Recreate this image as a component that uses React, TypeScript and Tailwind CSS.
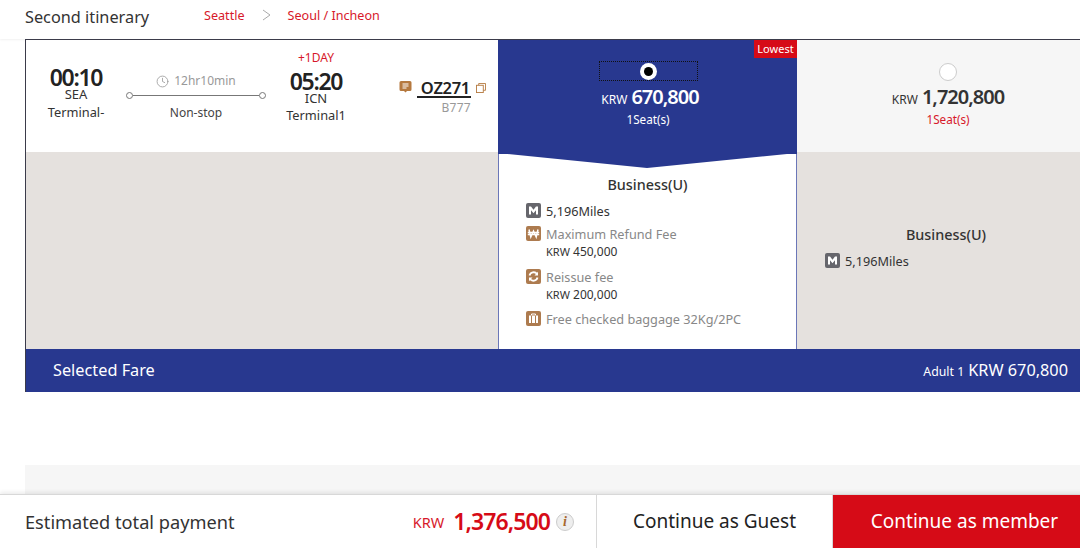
import { Clock } from "lucide-react";

const font = "font-['Noto_Sans','Open_Sans',sans-serif]";

function Square({ color, children }: { color: string; children: React.ReactNode }) {
  return (
    <svg width="15" height="15" viewBox="0 0 15 15" className="shrink-0">
      <rect width="15" height="15" rx="2" fill={color} />
      {children}
    </svg>
  );
}

function MilesIcon() {
  return (
    <Square color="#66666c">
      <path d="M3 11.500V3.500h2l2.500 3.200L10 3.500h2v8h-2V7.200L7.500 10.200 5 7.200v4.300z" fill="#fff" />
    </Square>
  );
}

function WonIcon() {
  return (
    <Square color="#ad7b4f">
      <path d="M3 3.500l1.800 7.500 2.700-6 2.700 6L12 3.500M1.800 6.500h11.400M1.800 8.500h11.400" stroke="#fff" strokeWidth="1.500" fill="none" />
    </Square>
  );
}

function ReissueIcon() {
  return (
    <Square color="#ad7b4f">
      <path d="M3.500 6.500a4.200 4.200 0 0 1 7.500-1.500M11.500 8.500a4.200 4.200 0 0 1-7.500 1.500" stroke="#fff" strokeWidth="1.800" fill="none" />
      <path d="M12 2.800V6.600H8.500zM3 12.200V8.400h3.500z" fill="#fff" />
    </Square>
  );
}

function BagIcon() {
  return (
    <Square color="#ad7b4f">
      <path d="M5.500 4.500V3h4v1.500" stroke="#fff" strokeWidth="1" fill="none" />
      <rect x="3" y="4.500" width="9" height="7.500" fill="#fff" />
      <path d="M5.500 4.500V12M9.500 4.500V12" stroke="#ad7b4f" strokeWidth="1" />
    </Square>
  );
}

function TimeBlock({ time, code, terminal, spaced }: { time: string; code: string; terminal: string; spaced?: boolean }) {
  return (
    <div className="flex flex-col items-center text-[#333]">
      <div className="text-[23px] leading-[22px] font-semibold tracking-[-1.300px] text-[#222]">{time}</div>
      <div className="text-[13px] leading-[12px]">{code}</div>
      <div className={`text-[12.800px] leading-[18px] ${spaced ? "mt-[3px]" : "mt-[2px]"}`}>{terminal}</div>
    </div>
  );
}

function FlightInfo() {
  return (
    <div className="relative w-[472px] h-[112px] bg-white shrink-0">
      <div className="flex h-full">
        <div className="w-[100px] pt-[26px] flex justify-center">
          <TimeBlock time="00:10" code="SEA" terminal="Terminal-" spaced />
        </div>
        <div className="w-[140px] pt-[33px] flex flex-col items-center">
          <div className="flex items-center gap-[5px] text-[12px] leading-[16px] text-[#999]">
            <Clock size={13} strokeWidth={1.500} />
            <span>12hr10min</span>
          </div>
          <div className="flex items-center w-[140px] mt-[3px]">
            <span className="w-[7px] h-[7px] rounded-full border border-[#777] bg-white" />
            <span className="flex-1 h-[1px] bg-[#777]" />
            <span className="w-[7px] h-[7px] rounded-full border border-[#777] bg-white" />
          </div>
          <div className="text-[12px] leading-[16px] text-[#444] mt-[6px]">Non-stop</div>
        </div>
        <div className="w-[100px] pt-[11px] flex flex-col items-center">
          <div className="text-[12px] leading-[14px] text-[#d7182a] mb-[5px]">+1DAY</div>
          <TimeBlock time="05:20" code="ICN" terminal="Terminal1" />
        </div>
        <div className="flex-1 pt-[39px] flex flex-col items-end pr-[12px]">
          <div className="flex items-start">
            <svg width="13" height="14" viewBox="0 0 13 14" className="mt-[1px] mr-[5px]">
              <path d="M2 1h9a1.500 1.500 0 0 1 1.500 1.500v7A1.500 1.500 0 0 1 11 11H8l-1.500 1.500L5 11H2A1.500 1.500 0 0 1 .5 9.500v-7A1.500 1.500 0 0 1 2 1z" fill="#b5793f" />
              <path d="M3.500 4h6M3.500 6h6M3.500 8h4" stroke="#fff" strokeWidth="1" />
            </svg>
            <span className="text-[16.500px] leading-[17px] font-semibold text-[#222] border-b-2 border-[#222] pl-[4px] pr-[1px] tracking-[-0.300px]">OZ271</span>
            <svg width="10" height="10" viewBox="0 0 11 11" className="ml-[5px] mt-[4px]" fill="none" stroke="#b5793f" strokeWidth="1">
              <rect x="0.500" y="2.500" width="7.500" height="8" />
              <path d="M3 2.500V.500h7.500v7.500H8" />
            </svg>
          </div>
          <div className="text-[12px] leading-[16px] text-[#999] mr-[15px] mt-[2px] tracking-[0.300px]">B777</div>
        </div>
      </div>
    </div>
  );
}

function BenefitRow({ icon, children, className }: { icon: React.ReactNode; children: React.ReactNode; className?: string }) {
  return (
    <div className={`flex gap-[5px] ${className ?? ""}`}>
      {icon}
      <div className="text-[12.700px] leading-[17px]">{children}</div>
    </div>
  );
}

function Fee({ amount }: { amount: string }) {
  return (
    <div className="text-[#333] whitespace-nowrap text-[12px]">
      <span className="text-[11px]">KRW</span> {amount}
    </div>
  );
}

export default function App() {
  return (
    <div className={`relative w-[1080px] h-[548px] overflow-hidden bg-white ${font}`}>
      <header className="h-[39px] flex items-start pl-[25px] pt-[5px] shadow-[0_1px_2px_rgba(0,0,0,0.06)]">
        <h2 className="w-[179px] text-[16.300px] leading-[24px] text-[#333]">Second itinerary</h2>
        <div className="flex items-center text-[12.600px] leading-[22px] text-[#d7182a]">
          <span>Seattle</span>
          <svg width="10" height="12" viewBox="0 0 10 12" className="ml-[17px] mr-[16px] -mt-[3px]" fill="none" stroke="#aaa" strokeWidth="1">
            <path d="M1 1l7 5-7 5" />
          </svg>
          <span>Seoul / Incheon</span>
        </div>
      </header>

      <section className="relative ml-[25px] border-l border-t border-[#3b3b4a]">
        <div className="flex h-[112px]">
          <FlightInfo />
          <div className="relative w-[299px] h-[114px] bg-[#28388f] text-white flex flex-col items-center pt-[21px] shrink-0 z-10">
            <div className="w-[99px] h-[20px] ml-[2px] border border-dotted border-[#111] flex items-center justify-center">
              <span className="w-[17px] h-[17px] rounded-full bg-white flex items-center justify-center">
                <span className="w-[9px] h-[9px] rounded-full bg-black" />
              </span>
            </div>
            <div className="flex items-baseline mt-[2px] h-[27px] leading-[27px] ml-[5px]">
              <span className="text-[12px] mr-[4px]">KRW</span>
              <span className="text-[20px] font-semibold tracking-[-1px]">670,800</span>
            </div>
            <div className="text-[11.700px] leading-[16px] mt-[1px] ml-[1px]">1Seat(s)</div>
            <div className="absolute right-0 top-0 w-[43px] h-[18px] bg-[#d60b17] text-[11px] leading-[18px] text-center">Lowest</div>
          </div>
          <div className="w-[302px] shrink-0 bg-[#f6f6f6] flex flex-col items-center pt-[23px]">
            <span className="w-[18px] h-[18px] rounded-full bg-white border border-[#ccc]" />
            <div className="flex items-baseline mt-[2px] h-[27px] leading-[27px] text-[#333]">
              <span className="text-[12px] mr-[4px]">KRW</span>
              <span className="text-[20px] font-semibold tracking-[-1px]">1,720,800</span>
            </div>
            <div className="text-[11.700px] leading-[16px] mt-[1px] text-[#d7182a]">1Seat(s)</div>
          </div>
        </div>

        <div className="flex h-[197px]">
          <div className="w-[472px] bg-[#e5e1de] shrink-0" />
          <div className="relative w-[299px] shrink-0 bg-white border-x border-[#6b76b8] px-[27px]">
            <svg width="299" height="17" viewBox="0 0 299 17" className="absolute -left-[1px] top-0 z-10">
              <polygon points="0,0 299,0 299,1 149,16 0,1" fill="#28388f" />
            </svg>
            <div className="text-[14.400px] leading-[20px] font-medium text-[#333] text-center mt-[23px]">Business(U)</div>
            <div className="mt-[8px]">
              <BenefitRow icon={<MilesIcon />}><span className="text-[#333]">5,196Miles</span></BenefitRow>
              <BenefitRow icon={<WonIcon />} className="mt-[6px]">
                <div className="text-[#888]">Maximum Refund Fee</div>
                <Fee amount="450,000" />
              </BenefitRow>
              <BenefitRow icon={<ReissueIcon />} className="mt-[9px]">
                <div className="text-[#888]">Reissue fee</div>
                <Fee amount="200,000" />
              </BenefitRow>
              <BenefitRow icon={<BagIcon />} className="mt-[8px]">
                <div className="text-[#888] whitespace-nowrap">Free checked baggage 32Kg/2PC</div>
              </BenefitRow>
            </div>
          </div>
          <div className="w-[302px] shrink-0 bg-[#e5e1de] pt-[73px] pl-[28px]">
            <div className="text-[14.400px] leading-[20px] font-medium text-[#333] text-center -ml-[32px]">Business(U)</div>
            <BenefitRow icon={<MilesIcon />} className="mt-[8px]"><span className="text-[#333]">5,196Miles</span></BenefitRow>
          </div>
        </div>

        <div className="h-[43px] bg-[#28388f] text-white flex items-center justify-between pl-[27px] pr-[12px]">
          <span className="text-[16.300px]">Selected Fare</span>
          <span className="flex items-baseline gap-[4px]">
            <span className="text-[12.300px]">Adult 1</span>
            <span className="text-[16.300px]">KRW 670,800</span>
          </span>
        </div>
      </section>

      <div className="ml-[25px] mt-[73px] h-[40px] bg-[#f6f6f6]" />

      <footer className="absolute left-0 bottom-0 h-[54px] flex bg-white border-t border-[#d8d8d8] shadow-[0_-2px_4px_rgba(0,0,0,0.08)]">
        <div className="w-[596px] flex items-center justify-between pl-[25px] pr-[22px]">
          <span className="text-[18.200px] text-[#333] mt-[2px]">Estimated total payment</span>
          <div className="flex items-center">
            <span className="text-[14.500px] text-[#d7182a] mr-[9px] mt-[2px]">KRW</span>
            <span className="text-[23px] font-semibold tracking-[-0.900px] text-[#d60b17]">1,376,500</span>
            <span className="w-[18px] h-[18px] ml-[6px] rounded-full bg-[#eee] border border-[#ccc] flex items-center justify-center text-[14px] italic font-bold font-['Liberation_Serif',serif] text-[#a8682e]">i</span>
          </div>
        </div>
        <button className="w-[237px] border-x border-[#d8d8d8] text-[19px] text-[#222] pb-[1px]">Continue as Guest</button>
        <button className="w-[263px] bg-[#d60b17] text-[19px] text-white pb-[1px]">Continue as member</button>
      </footer>
    </div>
  );
}
